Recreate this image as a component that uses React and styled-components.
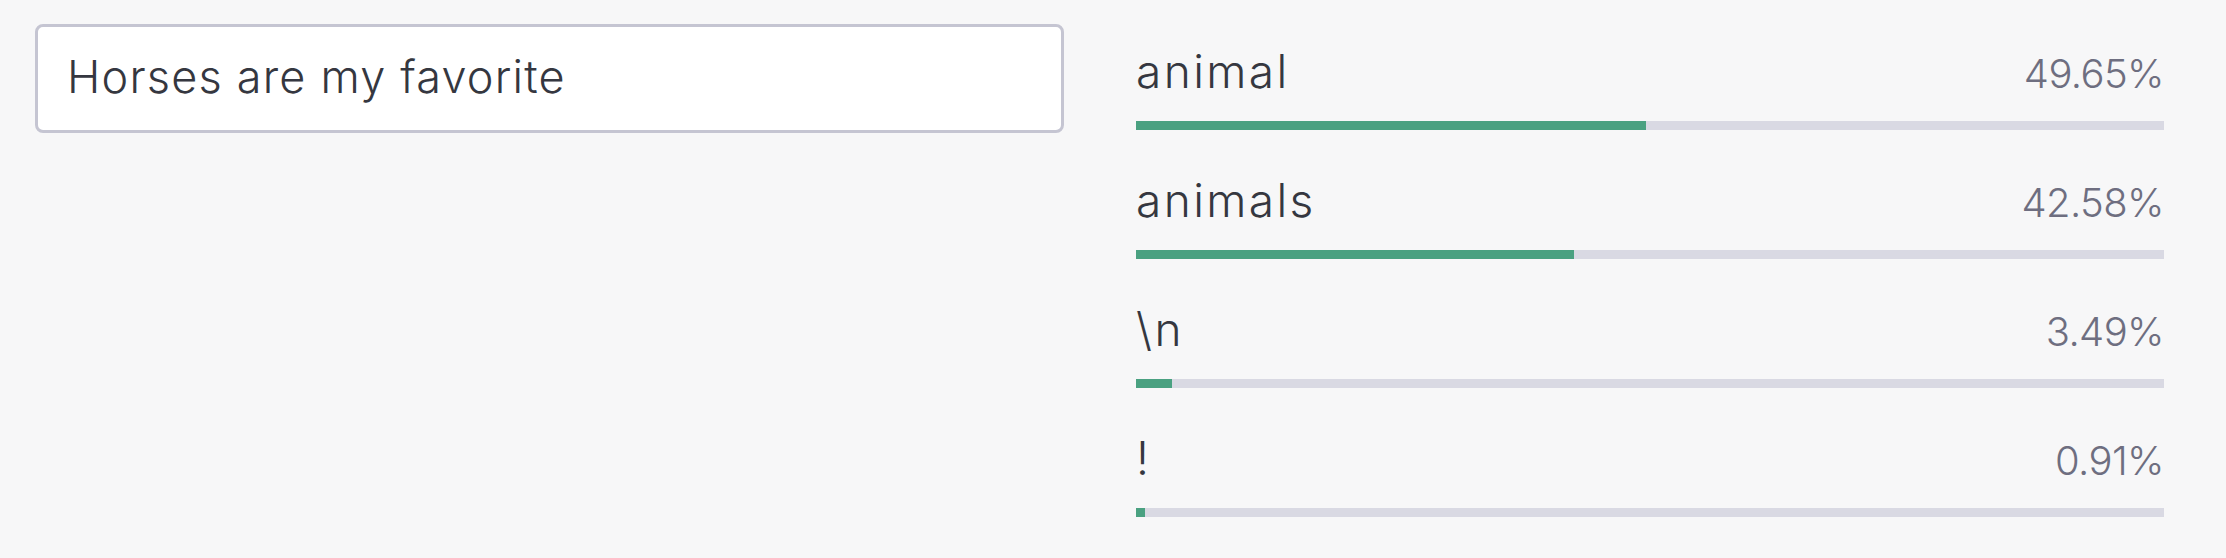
import React from "react"
import styled, { createGlobalStyle } from "styled-components"

const tokens = [
  { label: "animal", prob: 49.65 },
  { label: "animals", prob: 42.58 },
  { label: "\\n", prob: 3.49 },
  { label: "!", prob: 0.91 },
]

export default function App() {
  return (
    <>
      <GlobalStyle />
      <Page>
        <PromptBox defaultValue="Horses are my favorite" spellCheck={false} />
        <Results>
          {tokens.map((t) => (
            <TokenRow key={t.label}>
              <TokenLine>
                <TokenLabel>{t.label}</TokenLabel>
                <Percent>{t.prob.toFixed(2)}%</Percent>
              </TokenLine>
              <Track>
                <Fill style={{ width: `${t.prob}%` }} />
              </Track>
            </TokenRow>
          ))}
        </Results>
      </Page>
    </>
  )
}

const GlobalStyle = createGlobalStyle`
  html, body {
    margin: 0;
    background: #f7f7f8;
  }
  body {
    font-family: Inter, "Noto Sans", sans-serif;
    color: #353740;
  }
`

const Page = styled.div`
  display: flex;
  align-items: flex-start;
  gap: 72px;
  padding: 24px 62px 0 35px;
  height: 558px;
  box-sizing: border-box;
`

const PromptBox = styled.input`
  width: 1029px;
  height: 109px;
  box-sizing: border-box;
  border: 3px solid #c5c5d2;
  border-radius: 8px;
  background: #ffffff;
  padding: 0 29px 4px;
  font-family: Inter, "Noto Sans", sans-serif;
  font-size: 45px;
  font-weight: 350;
  letter-spacing: 1.2px;
  color: #353740;
  outline: none;
`

const Results = styled.div`
  flex: 1;
  display: flex;
  flex-direction: column;
  gap: 42px;
  padding-top: 19px;
`

const TokenRow = styled.div`
  display: flex;
  flex-direction: column;
  gap: 22px;
`

const TokenLine = styled.div`
  display: flex;
  justify-content: space-between;
  align-items: baseline;
  height: 56px;
  line-height: 56px;
`

const TokenLabel = styled.span`
  font-size: 46px;
  font-weight: 350;
  letter-spacing: 2.4px;
  color: #353740;
  white-space: pre;
`

const Percent = styled.span`
  font-size: 40px;
  font-weight: 350;
  letter-spacing: -0.6px;
  color: #6e6e80;
`

const Track = styled.div`
  height: 9px;
  background: #d9d9e3;
`

const Fill = styled.div`
  height: 100%;
  background: #4aa181;
`
